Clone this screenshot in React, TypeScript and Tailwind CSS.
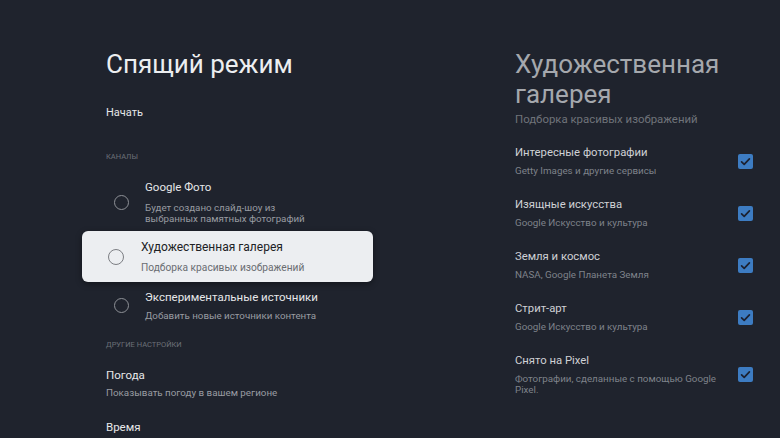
import React from 'react';

const font = { fontFamily: 'Roboto, "Noto Sans", sans-serif' };

function Radio({ big }: { big?: boolean }) {
  return (
    <div
      className={
        big
          ? 'w-[16px] h-[16px] shrink-0 rounded-full border-[1.5px] border-[#7c7e83]'
          : 'w-[15px] h-[15px] shrink-0 rounded-full border-[1.5px] border-[#8e9197]'
      }
    />
  );
}

function Check() {
  return (
    <div className="w-[15px] h-[15px] shrink-0 rounded-[2px] bg-[#3d7cc2] flex items-center justify-center">
      <svg width="15" height="15" viewBox="0 0 15 15">
        <polyline
          points="3.6,7.8 6.2,10.4 11.4,4.9"
          fill="none"
          stroke="#1c2130"
          strokeWidth="1.7"
          strokeLinecap="round"
          strokeLinejoin="round"
        />
      </svg>
    </div>
  );
}

const sources = [
  { title: 'Интересные фотографии', desc: ['Getty Images и другие сервисы'] },
  { title: 'Изящные искусства', desc: ['Google Искусство и культура'] },
  { title: 'Земля и космос', desc: ['NASA, Google Планета Земля'] },
  { title: 'Стрит-арт', desc: ['Google Искусство и культура'] },
  { title: 'Снято на Pixel', desc: ['Фотографии, сделанные с помощью Google', 'Pixel.'] },
];

export default function App() {
  return (
    <div className="w-[780px] h-[438px] overflow-hidden bg-[#1f232d] flex" style={font}>
      {/* left: settings list */}
      <div className="ml-[82px] w-[291px] pt-[49px] flex flex-col">
        <div className="pl-[24px] text-[26px] leading-[30px] text-[#eceef0]">Спящий режим</div>
        <div className="pl-[24px] mt-[26px] text-[11px] leading-[16px] text-[#e6e7e9]">Начать</div>
        <div className="pl-[24px] mt-[31px] text-[7.5px] leading-[10px] uppercase text-[#6c7078]">Каналы</div>

        <div className="mt-[18px] pl-[32px] flex items-center gap-[16px]">
          <Radio />
          <div>
            <div className="text-[11.5px] leading-[14px] text-[#e6e7e9]">Google Фото</div>
            <div className="mt-[8px] text-[9.75px] leading-[11px] text-[#999ca2]">
              Будет создано слайд-шоу из
              <br />
              выбранных памятных фотографий
            </div>
          </div>
        </div>

        <div className="mt-[7px] h-[51px] rounded-[6px] bg-[#eceef1] shadow-[0_2px_6px_rgba(0,0,0,0.4)] pl-[26px] flex items-center gap-[17px]">
          <Radio big />
          <div>
            <div className="text-[12px] leading-[15px] text-[#202124]">Художественная галерея</div>
            <div className="mt-[7px] text-[10.2px] leading-[12px] text-[#6a6d72]">Подборка красивых изображений</div>
          </div>
        </div>

        <div className="mt-[8px] pl-[32px] flex items-center gap-[16px]">
          <Radio />
          <div>
            <div className="text-[11.5px] leading-[14px] text-[#e6e7e9]">Экспериментальные источники</div>
            <div className="mt-[6px] text-[9.75px] leading-[11px] text-[#999ca2]">Добавить новые источники контента</div>
          </div>
        </div>

        <div className="pl-[24px] mt-[19px] text-[7.5px] leading-[10px] uppercase text-[#6c7078]">Другие настройки</div>

        <div className="pl-[24px] mt-[18px] text-[11.5px] leading-[14px] text-[#e6e7e9]">Погода</div>
        <div className="pl-[24px] mt-[5px] text-[9.8px] leading-[11px] text-[#999ca2]">Показывать погоду в вашем регионе</div>
        <div className="pl-[24px] mt-[22px] text-[11.5px] leading-[14px] text-[#e6e7e9]">Время</div>
      </div>

      {/* right: gallery sources */}
      <div className="ml-[142px] w-[238px] pt-[49px] flex flex-col">
        <div className="text-[26px] leading-[30px] text-[#a5a8ad]">
          Художественная
          <br />
          галерея
        </div>
        <div className="mt-[3px] text-[11.4px] leading-[14px] text-[#6f737a]">Подборка красивых изображений</div>

        <div className="mt-[20px] flex flex-col gap-[22px]">
          {sources.map((s) => (
            <div key={s.title} className="flex items-center justify-between">
              <div>
                <div className="text-[11.3px] leading-[14px] text-[#cfd1d5]">{s.title}</div>
                <div className="mt-[5px] text-[9.8px] leading-[11px] text-[#7e828a]">
                  {s.desc.map((d, i) => (
                    <div key={i}>{d}</div>
                  ))}
                </div>
              </div>
              <Check />
            </div>
          ))}
        </div>
      </div>
    </div>
  );
}
